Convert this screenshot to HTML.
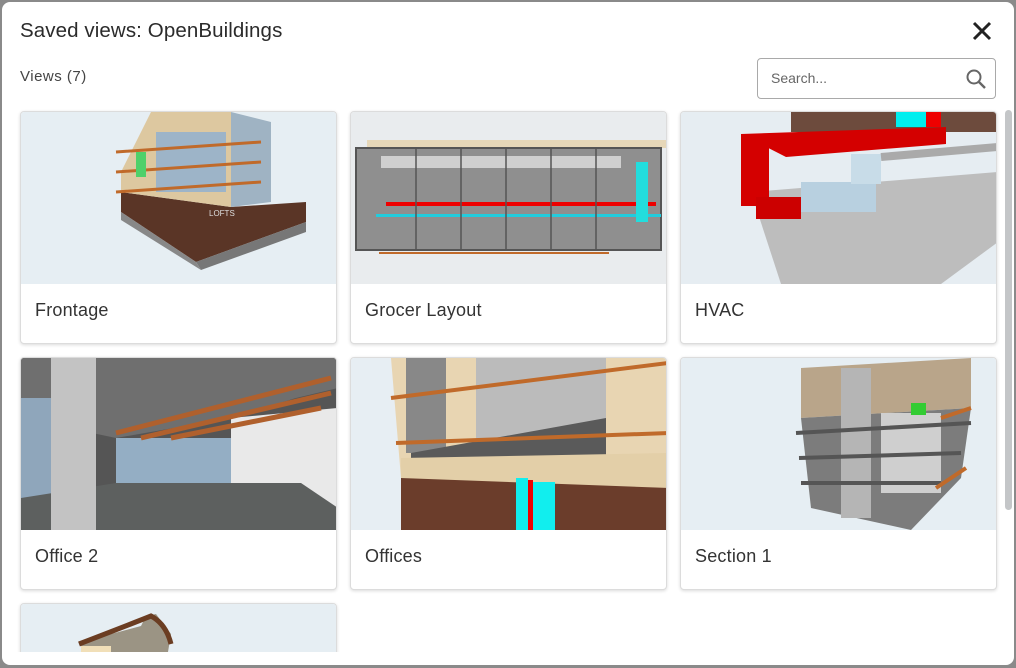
<!DOCTYPE html>
<html><head><meta charset="utf-8"><style>
*{box-sizing:border-box;margin:0;padding:0}
html,body{width:1016px;height:668px;overflow:hidden}
body{background:#8a8a8a;font-family:"Liberation Sans",sans-serif;position:relative}
.modal{position:absolute;left:2px;top:2px;width:1012px;height:663px;background:#fff;border-radius:8px;overflow:hidden}
.title{position:absolute;left:18px;top:17px;font-size:20.5px;color:#2b2b2b;letter-spacing:0.1px}
.close{position:absolute;left:968px;top:17px}
.views{position:absolute;left:18px;top:66px;font-size:15px;color:#444;letter-spacing:0.5px}
.search{position:absolute;left:755px;top:56px;width:239px;height:41px;border:1px solid #a9a9a9;border-radius:4px}
.search span{position:absolute;left:13px;top:11px;font-size:14px;color:#666}
.search svg{position:absolute;right:8px;top:9px}
.clip{position:absolute;left:0;top:0;width:1012px;height:650px;overflow:hidden}
.card{position:absolute;width:317px;height:233px;border:1px solid #dcdcdc;border-radius:4px;background:#fff;box-shadow:0 1px 3px rgba(0,0,0,.15);overflow:hidden}
.card svg{display:block}
.card .lbl{position:absolute;left:14px;top:188px;font-size:18px;color:#333;letter-spacing:0.2px}
.card .th{height:172px;border-bottom:1px solid #d8d8d8}
.sb{position:absolute;left:1003px;top:108px;width:7px;height:400px;background:#c4c6c8;border-radius:4px}
</style></head><body>
<div class="modal">
<div class="title">Saved views: OpenBuildings</div>
<svg class="close" width="24" height="24" viewBox="0 0 24 24"><path d="M4 4L20 20M20 4L4 20" stroke="#222" stroke-width="3"/></svg>
<div class="views">Views (7)</div>
<div class="search"><span>Search...</span><svg width="22" height="22" viewBox="0 0 22 22"><circle cx="9" cy="9" r="6.5" stroke="#666" stroke-width="2" fill="none"/><path d="M14 14L20 20" stroke="#666" stroke-width="2.4"/></svg></div>
<div class="clip">
<div class="card" style="left:18px;top:109px"><div class="th"><svg width="317" height="172">
<rect width="317" height="172" fill="#e6eef3"/>
<polygon points="100,100 175,150 285,110 285,90 210,95 100,80" fill="#5a3526"/>
<polygon points="100,60 130,0 210,0 210,95 100,80" fill="#ddc8a0"/>
<polygon points="210,0 250,10 250,90 210,95" fill="#9fb3c3"/>
<rect x="135" y="20" width="70" height="60" fill="#9db4c8"/>
<polygon points="175,150 285,110 285,120 180,158" fill="#777"/>
<polygon points="100,100 175,150 180,158 100,108" fill="#888"/>
<path d="M95 40L240 30M95 60L240 50M95 80L240 70" stroke="#c06a2a" stroke-width="3"/>
<text x="188" y="104" font-size="8" fill="#ddd" font-family="Liberation Sans">LOFTS</text>
<rect x="115" y="40" width="10" height="25" fill="#4fd06a"/>
</svg></div><div class="lbl">Frontage</div></div>

<div class="card" style="left:348px;top:109px"><div class="th"><svg width="317" height="172">
<rect width="317" height="172" fill="#e9ecee"/>
<rect x="16" y="28" width="300" height="8" fill="#e6d7b8"/>
<rect x="5" y="36" width="305" height="102" fill="#8f8f8f" stroke="#555" stroke-width="2"/>
<rect x="30" y="44" width="240" height="12" fill="#cfcfcf"/>
<rect x="35" y="90" width="270" height="4" fill="#e00"/>
<rect x="25" y="102" width="285" height="3" fill="#2cd"/>
<path d="M65 36V138M110 36V138M155 36V138M200 36V138M245 36V138" stroke="#555" stroke-width="1.5"/>
<rect x="285" y="50" width="12" height="60" fill="#2dd"/>
<rect x="28" y="140" width="230" height="2" fill="#c06a2a"/>
</svg></div><div class="lbl">Grocer Layout</div></div>

<div class="card" style="left:678px;top:109px"><div class="th"><svg width="317" height="172">
<rect width="317" height="172" fill="#e6edf2"/>
<polygon points="70,80 317,60 317,130 260,172 100,172" fill="#bdbdbd"/>
<rect x="110" y="0" width="207" height="20" fill="#6d4b3d"/>
<rect x="215" y="0" width="30" height="15" fill="#0ee"/><rect x="245" y="0" width="15" height="15" fill="#e00"/>
<polygon points="60,22 265,15 265,32 105,45" fill="#d40000"/>
<rect x="60" y="22" width="28" height="72" fill="#d40000"/>
<rect x="75" y="85" width="45" height="22" fill="#c00"/>
<rect x="120" y="70" width="75" height="30" fill="#b8d0e0"/>
<rect x="170" y="42" width="30" height="30" fill="#c8dce8"/>
<path d="M200 45L317 35" stroke="#aaa" stroke-width="8"/>
</svg></div><div class="lbl">HVAC</div></div>

<div class="card" style="left:18px;top:355px"><div class="th"><svg width="317" height="172">
<rect width="317" height="172" fill="#555"/>
<polygon points="0,0 317,0 317,30 275,40 210,60 95,80 0,60" fill="#6f6f6f"/>
<rect x="0" y="40" width="30" height="130" fill="#8fa6bb"/>
<rect x="95" y="80" width="115" height="45" fill="#94aec4"/>
<polygon points="210,60 317,50 317,150 280,145 210,125" fill="#e9e9e9"/>
<polygon points="0,140 95,125 280,125 317,150 317,172 0,172" fill="#5d605f"/>
<rect x="30" y="0" width="45" height="172" fill="#c3c3c3"/>
<path d="M95 75L310 20M120 80L310 35M150 80L300 50" stroke="#b0602d" stroke-width="5"/>
</svg></div><div class="lbl">Office 2</div></div>

<div class="card" style="left:348px;top:355px"><div class="th"><svg width="317" height="172">
<rect width="317" height="172" fill="#e7eef3"/>
<polygon points="40,0 317,0 317,135 50,120" fill="#e8d5b2"/>
<rect x="55" y="0" width="40" height="95" fill="#888"/>
<rect x="125" y="0" width="130" height="95" fill="#bbb"/>
<polygon points="60,95 255,60 255,110 60,115" fill="#5a5a5a"/>
<polygon points="50,100 317,95 317,130 50,120" fill="#e3cfa8"/>
<polygon points="50,120 317,130 317,172 50,172" fill="#6b3d2b"/>
<rect x="165" y="120" width="12" height="52" fill="#1ee"/><rect x="177" y="122" width="5" height="50" fill="#e00"/><rect x="182" y="124" width="22" height="48" fill="#1ee"/>
<path d="M40 40L317 5M45 85L317 75" stroke="#c06a2a" stroke-width="4"/>
</svg></div><div class="lbl">Offices</div></div>

<div class="card" style="left:678px;top:355px"><div class="th"><svg width="317" height="172">
<rect width="317" height="172" fill="#e6eef3"/>
<polygon points="120,10 290,0 290,50 120,60" fill="#b9a58a"/>
<polygon points="120,60 290,50 280,120 230,172 130,150" fill="#7c7c7c"/>
<rect x="160" y="10" width="30" height="150" fill="#b5b5b5"/>
<rect x="200" y="55" width="60" height="80" fill="#cfcfcf"/>
<path d="M115 75L290 65M118 100L280 95M120 125L260 125" stroke="#555" stroke-width="4"/>
<path d="M260 60L290 50M255 130L285 110" stroke="#c06a2a" stroke-width="4"/>
<rect x="230" y="45" width="15" height="12" fill="#3c3"/>
</svg></div><div class="lbl">Section 1</div></div>

<div class="card" style="left:18px;top:601px"><div class="th"><svg width="317" height="172">
<rect width="317" height="172" fill="#e6eef3"/>
<polygon points="60,38 120,22 125,12 135,10 150,30 145,60 60,60" fill="#9b9484"/>
<path d="M58 40Q110 20 130 12Q145 20 150 40" stroke="#6b3d22" stroke-width="5" fill="none"/>
<rect x="60" y="42" width="30" height="20" fill="#f1dfb8"/>
</svg></div></div>
</div>
<div class="sb"></div>
</div>
</body></html>
